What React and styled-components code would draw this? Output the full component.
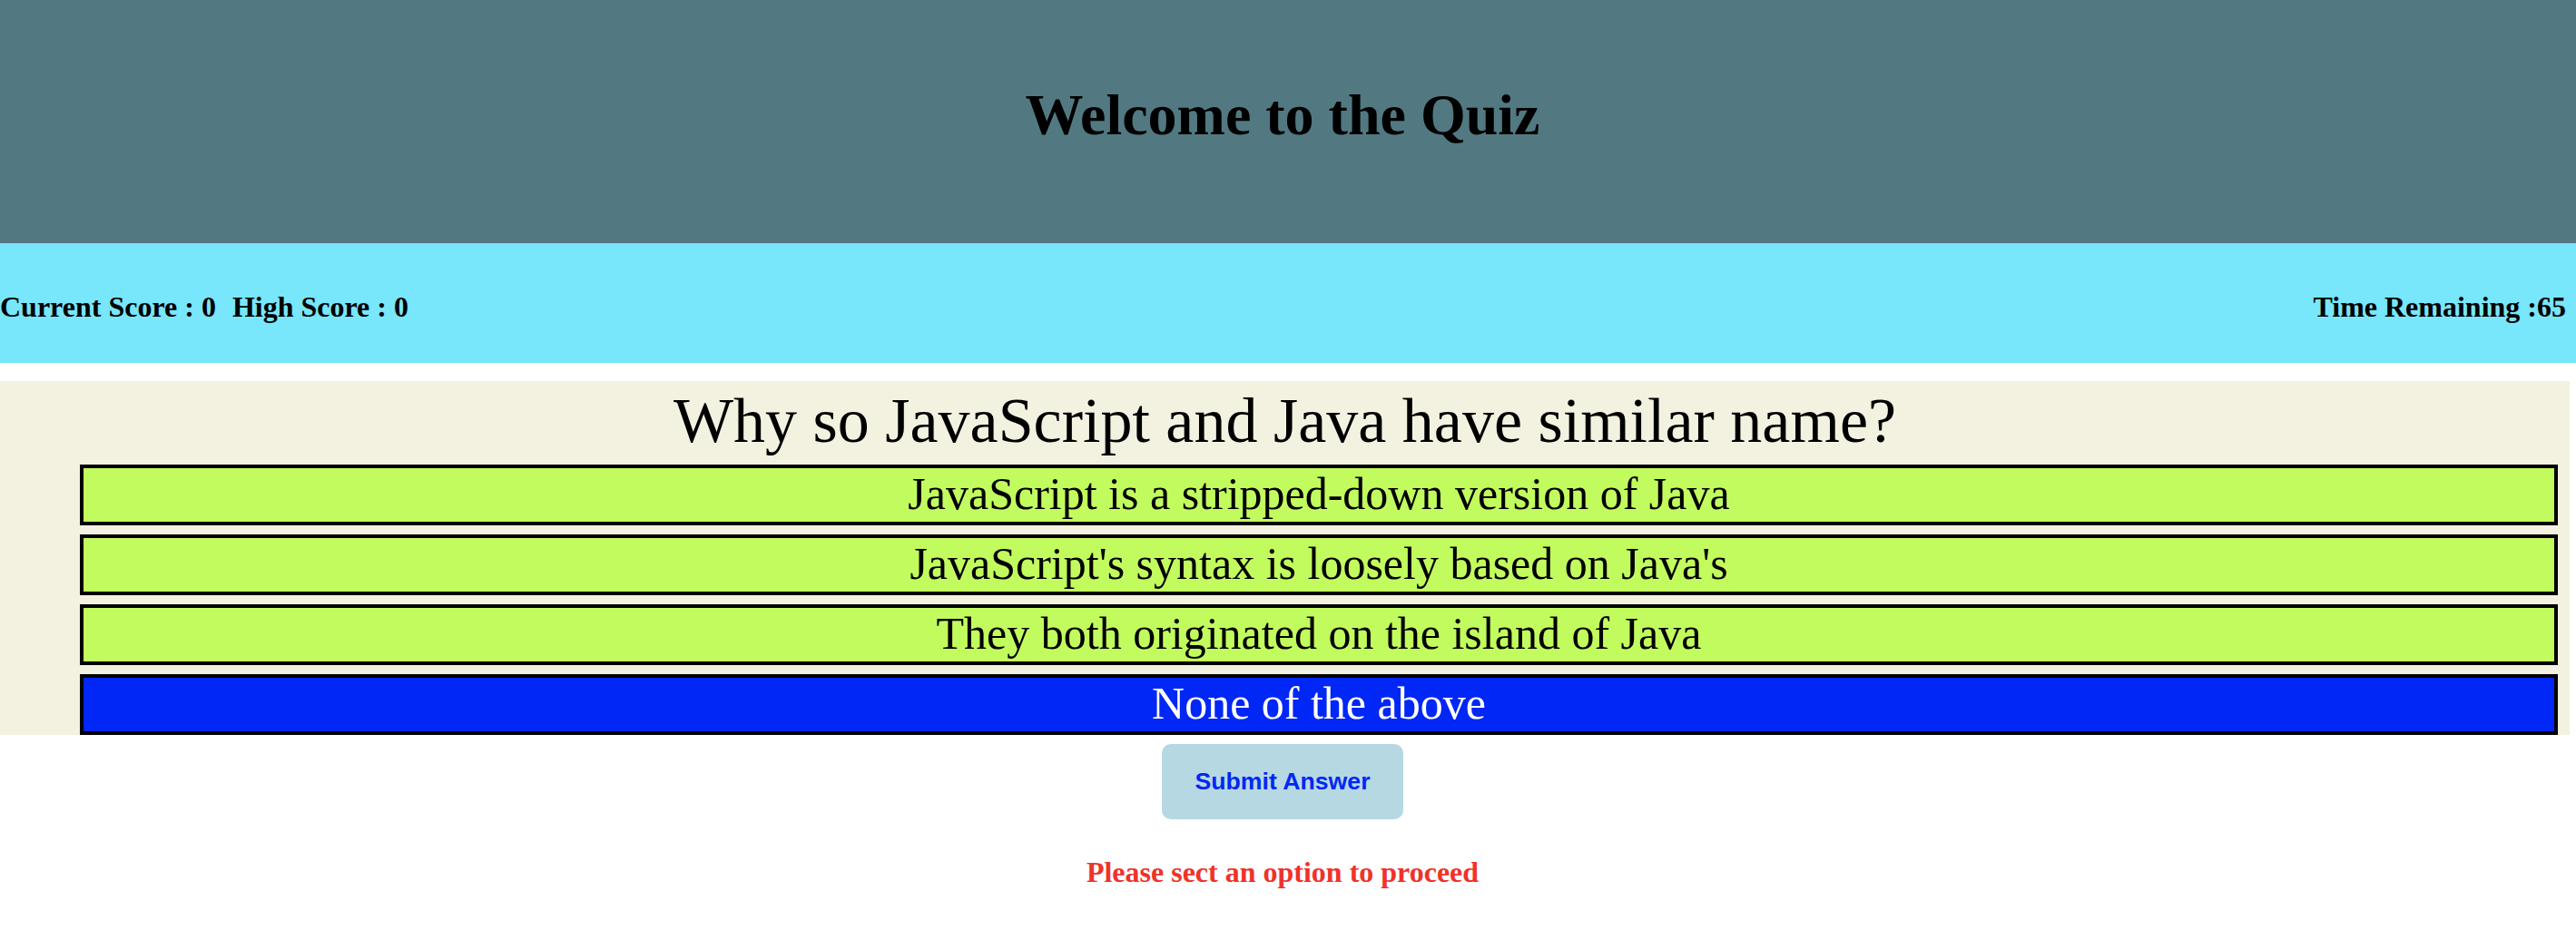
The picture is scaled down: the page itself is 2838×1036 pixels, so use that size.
import React, { useState } from "react";
import styled, { createGlobalStyle } from "styled-components";

const GlobalStyle = createGlobalStyle`
  html, body {
    margin: 0;
    padding: 0;
    background: #ffffff;
    font-family: "Liberation Serif", "Times New Roman", serif;
  }
  * { box-sizing: border-box; }
`;

const Page = styled.div`
  width: 100%;
  display: flex;
  flex-direction: column;
`;

const Header = styled.header`
  height: 268px;
  background: #527981;
  padding: 90px 12px 0 0;
  display: flex;
  justify-content: center;
  align-items: flex-start;
`;

const Title = styled.h1`
  margin: 0;
  font-family: "Liberation Serif", "Times New Roman", serif;
  font-size: 64px;
  font-weight: 700;
  color: #000000;
`;

const ScoreBar = styled.div`
  height: 132px;
  background: #78e6fb;
  display: flex;
  align-items: center;
  justify-content: space-between;
  padding: 8px 11px 0 0;
`;

const ScoreGroup = styled.div`
  display: flex;
  gap: 18px;
`;

const ScoreText = styled.span`
  font-size: 32px;
  font-weight: 700;
  color: #000000;
  white-space: nowrap;
`;

const Main = styled.main`
  margin-top: 20px;
  padding-right: 7px;
  display: flex;
  flex-direction: column;
  align-items: center;
`;

const QuestionCard = styled.section`
  width: 100%;
  background: #f3f2e0;
  display: flex;
  flex-direction: column;
`;

const Question = styled.h2`
  margin: 0;
  font-size: 70px;
  font-weight: 400;
  text-align: center;
  color: #000000;
  line-height: 82px;
  height: 82px;
  padding-top: 3px;
`;

const OptionList = styled.ul`
  list-style: none;
  margin: 10px 0 0 0;
  padding: 0 13px 0 88px;
  display: flex;
  flex-direction: column;
  gap: 10px;
`;

const Option = styled.li`
  height: 67px;
  border: 4px solid #000000;
  background: ${(p) => (p.$selected ? "#0027f5" : "#c2fb5e")};
  color: ${(p) => (p.$selected ? "#ffffff" : "#000000")};
  font-size: 50px;
  line-height: 57px;
  text-align: center;
  cursor: pointer;
  white-space: nowrap;
`;

const SubmitButton = styled.button`
  margin: 10px 5px 0 0;
  width: 266px;
  height: 83px;
  border: none;
  border-radius: 10px;
  background: #b6d8e3;
  color: #0027f5;
  font-family: "Liberation Sans", Arial, sans-serif;
  font-size: 26.67px;
  font-weight: 700;
  cursor: pointer;
`;

const ErrorText = styled.p`
  margin: 40px 5px 0 0;
  font-size: 32px;
  font-weight: 700;
  color: #f0322a;
`;

const options = [
  "JavaScript is a stripped-down version of Java",
  "JavaScript's syntax is loosely based on Java's",
  "They both originated on the island of Java",
  "None of the above",
];

export default function App() {
  const [selected, setSelected] = useState(3);
  return (
    <>
      <GlobalStyle />
      <Page>
        <Header>
          <Title>Welcome to the Quiz</Title>
        </Header>
        <ScoreBar>
          <ScoreGroup>
            <ScoreText>Current Score : 0</ScoreText>
            <ScoreText>High Score : 0</ScoreText>
          </ScoreGroup>
          <ScoreText>Time Remaining :65</ScoreText>
        </ScoreBar>
        <Main>
          <QuestionCard>
            <Question>Why so JavaScript and Java have similar name?</Question>
            <OptionList>
              {options.map((o, i) => (
                <Option key={o} $selected={i === selected} onClick={() => setSelected(i)}>
                  {o}
                </Option>
              ))}
            </OptionList>
          </QuestionCard>
          <SubmitButton>Submit Answer</SubmitButton>
          <ErrorText>Please sect an option to proceed</ErrorText>
        </Main>
      </Page>
    </>
  );
}
